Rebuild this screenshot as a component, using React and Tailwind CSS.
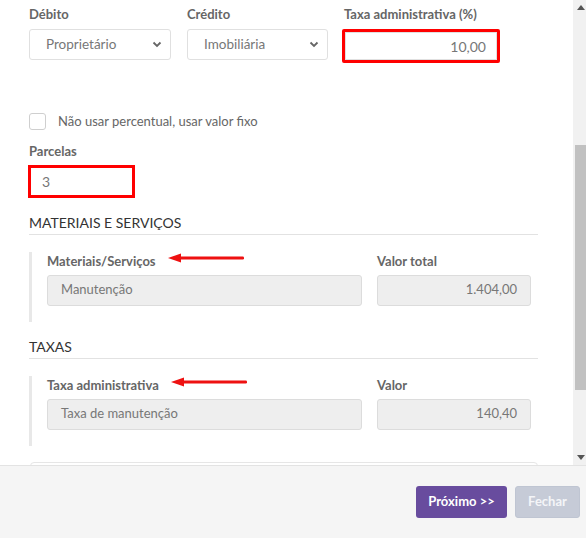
import React from "react";

function Label({ children, className = "" }) {
  return (
    <div className={`text-[13px] font-bold leading-[17px] text-[#666] ${className}`}>
      {children}
    </div>
  );
}

function Select({ value }) {
  return (
    <div className="flex h-[31px] items-center justify-between rounded-[3px] border border-[#e0e0e0] bg-white pl-[16px] pr-[8px] text-[13.5px] text-[#777]">
      <span>{value}</span>
      <svg width="10" height="7" viewBox="0 0 10 7">
        <path d="M1.5 1.5 L5 5 L8.5 1.5" fill="none" stroke="#666" strokeWidth="1.8" />
      </svg>
    </div>
  );
}

function Arrow() {
  return (
    <svg width="76" height="10" viewBox="0 0 76 10" className="shrink-0">
      <path d="M0 5 L13 0.5 L13 9.5 Z" fill="#ee1111" />
      <rect x="10" y="3.5" width="66" height="3" rx="1.2" fill="#ee1111" />
    </svg>
  );
}

function ReadOnly({ value, right }) {
  return (
    <div
      className={`flex h-[31px] items-center rounded-[3px] border border-[#dcdcdc] bg-[#eeeeee] px-[13px] text-[13px] text-[#777] ${
        right ? "justify-end" : ""
      }`}
    >
      {value}
    </div>
  );
}

function ItemCard({ label, value, amountLabel, amount }) {
  return (
    <div className="mt-[17px] flex border-l-[3px] border-[#e8e8e8] pb-[16px] pl-[15px] pr-[7px]">
      <div className="w-[315px]">
        <div className="flex items-center gap-[12px]">
          <Label className="pt-[1px]">{label}</Label>
          <div className="-mt-[5px]">
            <Arrow />
          </div>
        </div>
        <div className="mt-[5px]">
          <ReadOnly value={value} />
        </div>
      </div>
      <div className="ml-[15px] w-[154px]">
        <Label className="pt-[1px]">{amountLabel}</Label>
        <div className="mt-[5px]">
          <ReadOnly value={amount} right />
        </div>
      </div>
    </div>
  );
}

function SectionTitle({ children }) {
  return (
    <div className="mt-[16px] border-b border-[#e2e2e2] pb-[2px] text-[14px] leading-[18px] text-[#333]">
      {children}
    </div>
  );
}

function Scrollbar() {
  return (
    <div className="flex w-[13px] shrink-0 flex-col items-end bg-[#f1f1f1]">
      <div className="flex h-[14px] w-[13px] items-center justify-center pl-[3px]">
        <svg width="8" height="5" viewBox="0 0 8 5">
          <path d="M0 5 L4 0 L8 5 Z" fill="#555" />
        </svg>
      </div>
      <div className="h-[131px]" />
      <div className="h-[245px] w-[11px] bg-[#c1c1c1]" />
      <div className="flex-1" />
      <div className="flex h-[16px] w-[13px] items-center justify-center pl-[3px]">
        <svg width="8" height="5" viewBox="0 0 8 5">
          <path d="M0 0 L8 0 L4 5 Z" fill="#555" />
        </svg>
      </div>
    </div>
  );
}

export default function App() {
  return (
    <div className="flex h-[538px] w-[586px] flex-col bg-white font-['Lato','Noto_Sans',sans-serif]">
      <div className="flex min-h-0 flex-1">
        <div className="flex-1 overflow-hidden pl-[29px] pr-[35px] pt-[6px]">
          <div className="flex">
            <div className="w-[142px]">
              <Label>Débito</Label>
              <div className="mt-[6px]">
                <Select value="Proprietário" />
              </div>
            </div>
            <div className="ml-[16px] w-[141px]">
              <Label>Crédito</Label>
              <div className="mt-[6px]">
                <Select value="Imobiliária" />
              </div>
            </div>
            <div className="ml-[14px] w-[158px]">
              <Label className="pl-[2px]">Taxa administrativa (%)</Label>
              <div className="mt-[6px] rounded-[2px] border-[3px] border-[#ff0000]">
                <div className="flex h-[28px] items-center justify-end border border-[#e0e0e0] bg-white px-[10px] text-[14px] text-[#777]">
                  10,00
                </div>
              </div>
            </div>
          </div>

          <label className="mt-[49px] flex items-center gap-[12px] text-[13px] text-[#666]">
            <span className="h-[17px] w-[17px] rounded-[3px] border border-[#cfcfcf] bg-white" />
            <span>Não usar percentual, usar valor fixo</span>
          </label>

          <Label className="mt-[11px]">Parcelas</Label>
          <div className="-ml-[1px] mt-[5px] flex h-[33px] w-[107px] items-center border-[3px] border-[#ff0000] px-[11px] text-[14px] text-[#777]">
            3
          </div>

          <SectionTitle>MATERIAIS E SERVIÇOS</SectionTitle>
          <ItemCard
            label="Materiais/Serviços"
            value="Manutenção"
            amountLabel="Valor total"
            amount="1.404,00"
          />

          <SectionTitle>TAXAS</SectionTitle>
          <ItemCard
            label="Taxa administrativa"
            value="Taxa de manutenção"
            amountLabel="Valor"
            amount="140,40"
          />

          <div className="ml-[1px] mt-[16px] h-[20px] rounded-t-[4px] border border-[#e6e6e6]" />
        </div>
        <Scrollbar />
      </div>
      <div className="flex h-[73px] shrink-0 items-center justify-end gap-[8px] border-t border-[#e3e3e3] bg-[#f5f5f5] pr-[6px]">
        <button
          type="button"
          className="h-[32px] w-[91px] rounded-[3px] bg-[#684c9e] text-[13px] font-bold text-white"
        >
          Próximo &gt;&gt;
        </button>
        <button
          type="button"
          className="h-[32px] w-[65px] rounded-[3px] border border-[#bfc5d2] bg-[#c6cbd7] text-[13px] font-bold text-[#f4f5f8]"
        >
          Fechar
        </button>
      </div>
    </div>
  );
}
